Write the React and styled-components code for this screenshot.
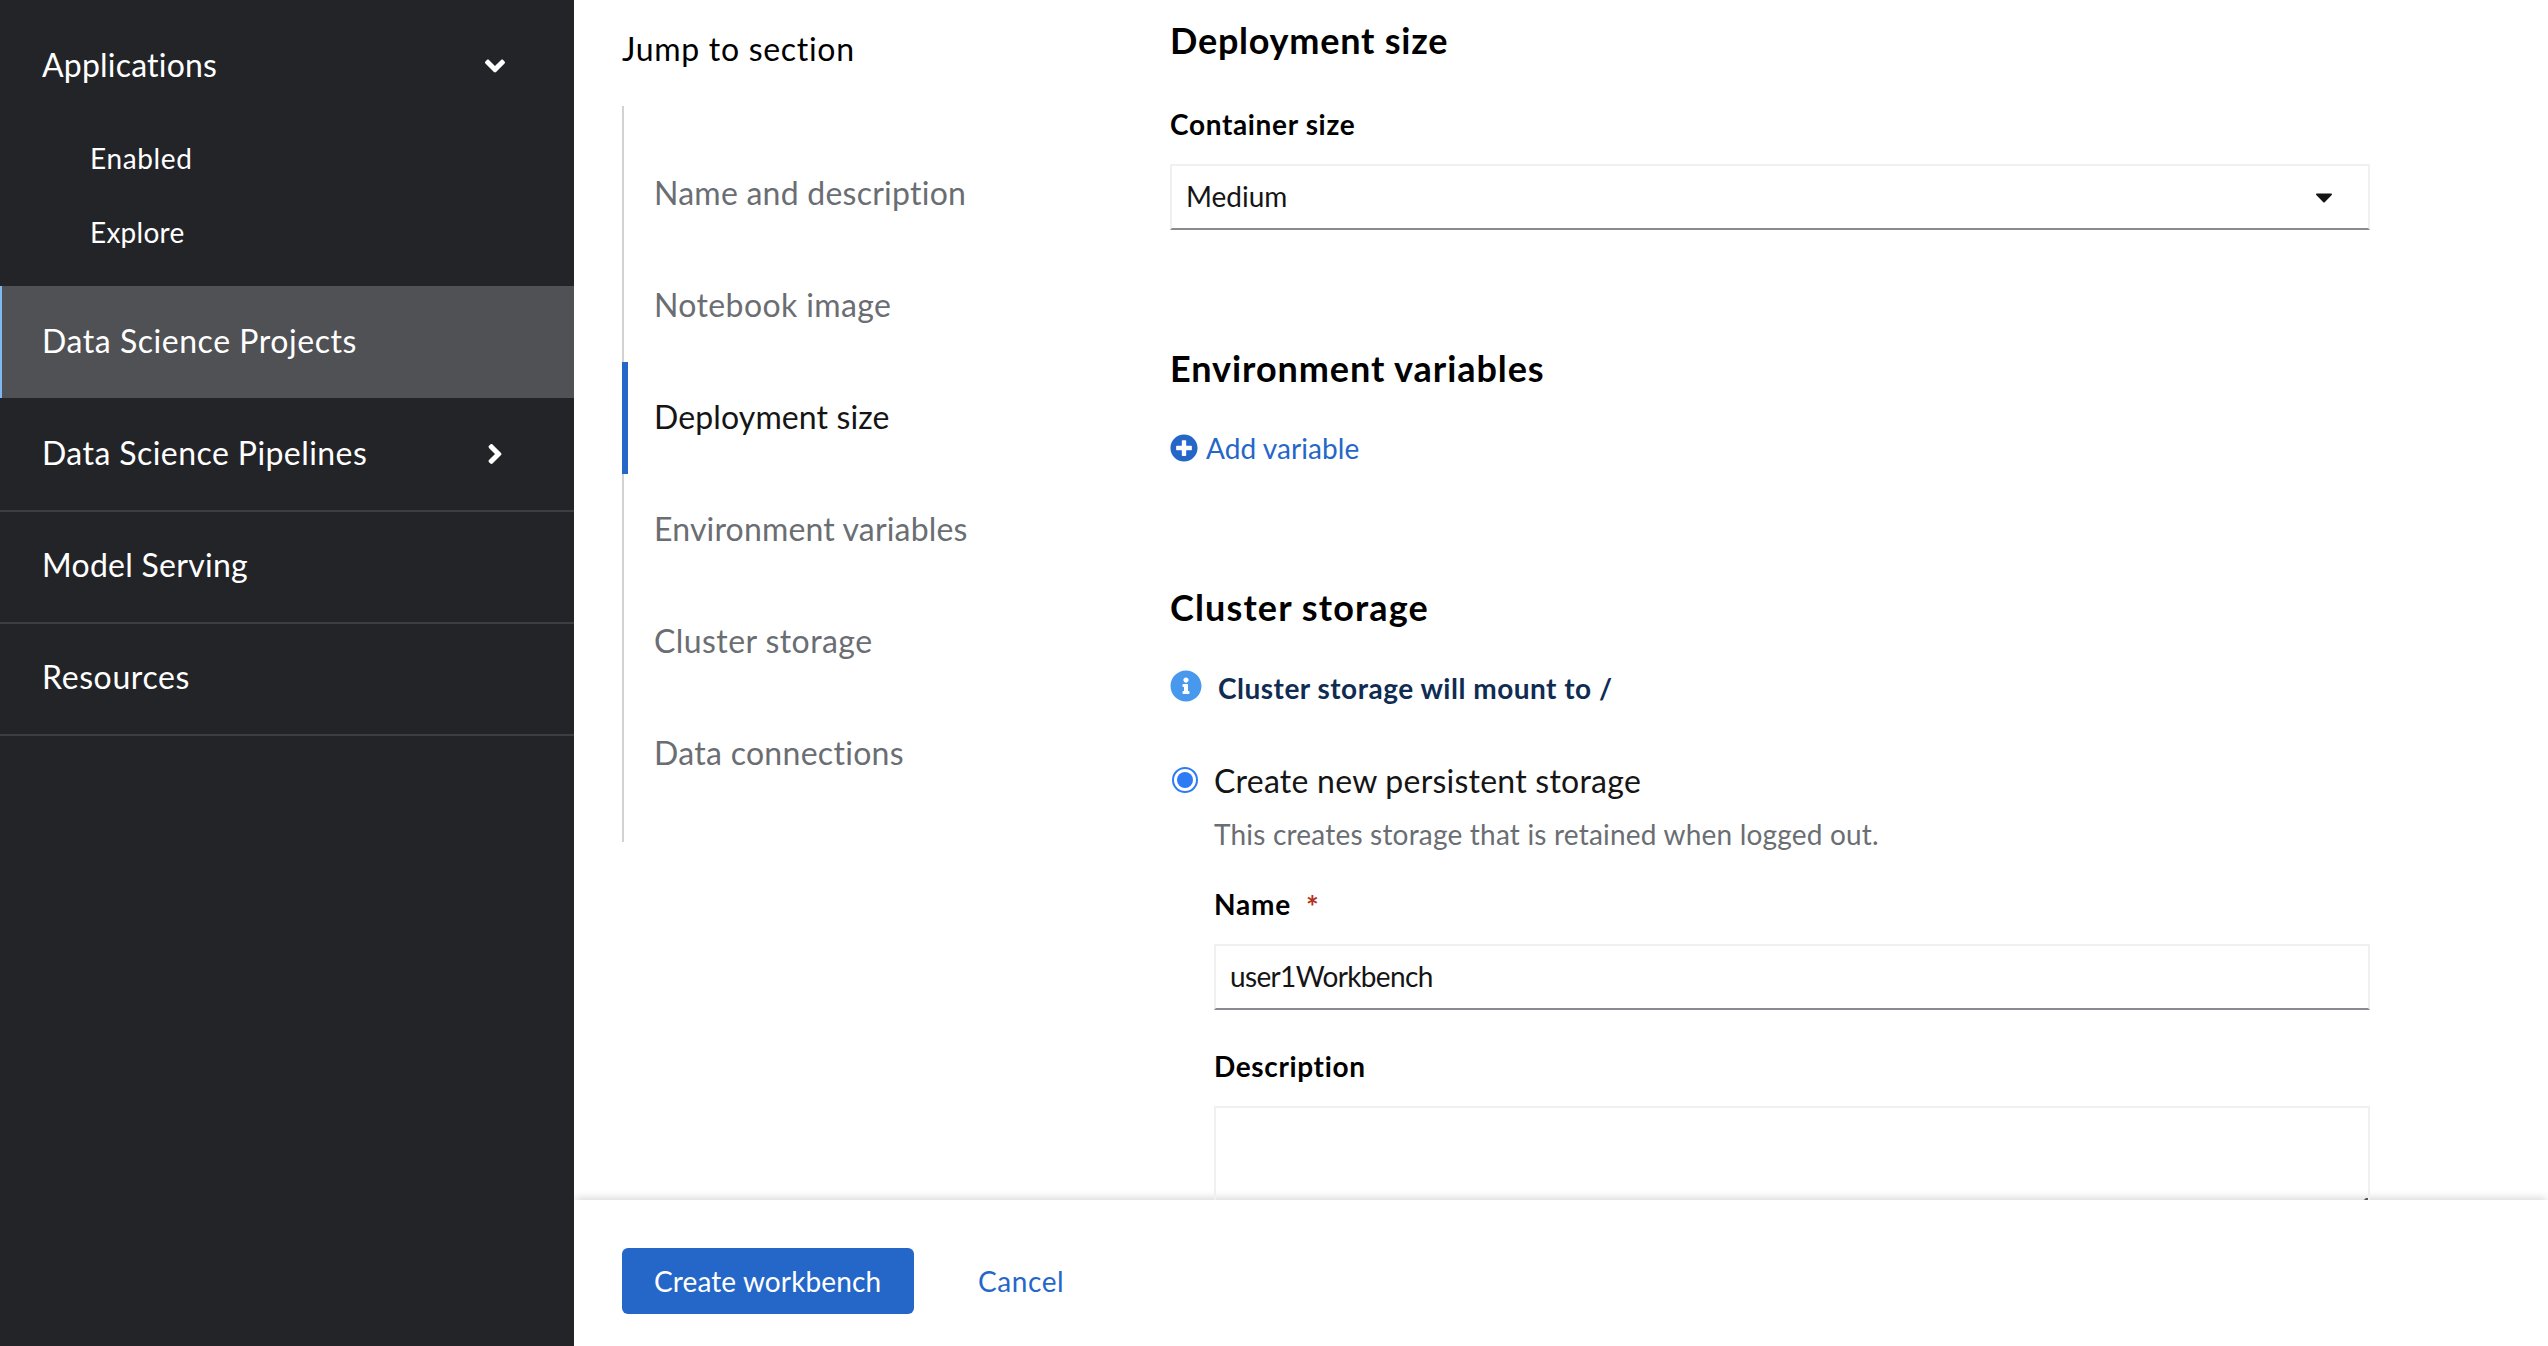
import React from 'react';
import styled, { createGlobalStyle, css } from 'styled-components';
import { FaAngleDown, FaAngleRight, FaPlusCircle, FaInfoCircle } from 'react-icons/fa';

const GlobalStyle = createGlobalStyle`
  *, *::before, *::after { box-sizing: border-box; }
  body {
    margin: 0;
    overflow: hidden;
    background: #fff;
    color: #151515;
    font-family: Lato, "Liberation Sans", sans-serif;
    font-size: 32px;
  }
  svg { display: block; flex: none; }
`;

const Text = styled.span`
  letter-spacing: ${(p) => p.$track || 0}px;
  white-space: nowrap;
`;

const Page = styled.div`
  display: grid;
  grid-template-columns: 574px 1fr;
  height: 1346px;
`;

/* Sidebar */
const Sidebar = styled.nav`
  position: relative;
  z-index: 1;
  background: #232428;
  color: #fff;
`;

const navRow = css`
  display: flex;
  align-items: center;
  justify-content: space-between;
  padding-left: 42px;
`;

const NavGroup = styled.div`
  ${navRow}
  height: 121px;
  padding: 8px 63px 0 42px;
`;

const SubList = styled.div`
  padding-bottom: 17px;
`;

const SubItem = styled.a`
  display: flex;
  align-items: center;
  height: 74px;
  padding-left: 90px;
  font-size: 28px;
`;

const NavItem = styled.a`
  ${navRow}
  height: ${(p) => p.$height || 112}px;
  padding-right: 63px;
  padding-bottom: ${(p) => (p.$height ? 3 : 5)}px;
  border-bottom: 2px solid #3c3e42;
  ${(p) =>
    p.$active &&
    css`
      padding-left: 40px;
      padding-bottom: 3px;
      border-bottom: 0;
      border-left: 2px solid #7db8f3;
      background: #505154;
    `}
`;

const Chevron = styled.span`
  display: flex;
  justify-content: center;
  width: 32px;
  padding-top: 2px;
`;

/* Main area */
const Main = styled.main`
  display: grid;
  grid-template-rows: 1200px 146px;
  min-width: 0;
`;

const Body = styled.div`
  display: grid;
  grid-template-columns: 548px 1200px;
  padding-left: 48px;
  overflow: hidden;
`;

const JumpNav = styled.aside`
  padding-top: 25px;
`;

const JumpTitle = styled.div`
  margin-bottom: 33px;
  line-height: 48px;
  color: #000;
`;

const JumpList = styled.div`
  padding: 32px 0;
  border-left: 2px solid #d2d2d2;
`;

const JumpItem = styled.a`
  display: flex;
  align-items: center;
  height: 112px;
  margin-left: -2px;
  padding: 0 0 3px 26px;
  border-left: 6px solid ${(p) => (p.$active ? '#2567c8' : 'transparent')};
  color: ${(p) => (p.$active ? '#151515' : '#6a6e73')};
`;

const Form = styled.form`
  display: flex;
  flex-direction: column;
  gap: 115px;
  padding-top: 17px;
`;

const Section = styled.section``;

const Heading = styled.h2`
  margin: 0 0 ${(p) => p.$gap}px;
  font-size: 36px;
  font-weight: 700;
  line-height: 46px;
  color: #000;
`;

const Label = styled.label`
  display: flex;
  gap: 15px;
  height: 42px;
  margin-bottom: 19px;
  font-size: 28px;
  font-weight: 700;
  line-height: 42px;
  color: #000;
`;

const Required = styled.span`
  padding-top: 2px;
  font-size: 30px;
  color: #b5301d;
`;

const Control = styled.div`
  display: flex;
  align-items: center;
  justify-content: space-between;
  height: 66px;
  padding: 0 36px 2px 14px;
  border: 2px solid #f0f0f0;
  border-bottom-color: #8a8a90;
  font-size: 28px;
`;

const Caret = styled.svg`
  margin-top: 4px;
`;

const TextArea = styled.div`
  position: relative;
  height: 112px;
  border: 2px solid #f0f0f0;
  border-bottom-color: #8a8a90;
`;

const Grip = styled.svg`
  position: absolute;
  right: 0;
  bottom: 0;
`;

const LinkAction = styled.a`
  display: flex;
  align-items: center;
  gap: 8px;
  font-size: 28px;
  line-height: 42px;
  color: #2567c8;
`;

const Alert = styled.div`
  display: flex;
  gap: 16px;
  margin-bottom: 47px;
  font-size: 28px;
  font-weight: 700;
  line-height: 42px;
  color: #0f2c53;
`;

const AlertIcon = styled.span`
  padding-top: 3px;
  color: #4898ed;
`;

const RadioRow = styled.label`
  display: flex;
  align-items: center;
  height: 48px;
  gap: 16px;
  padding-left: 2px;
`;

const Radio = styled.span`
  display: grid;
  place-items: center;
  width: 26px;
  height: 26px;
  border: 2px solid #2f7bf6;
  border-radius: 50%;

  &::after {
    content: '';
    width: 16px;
    height: 16px;
    border-radius: 50%;
    background: #2f7bf6;
  }
`;

const Nested = styled.div`
  padding-left: 44px;
`;

const Helper = styled.div`
  margin: 9px 0 28px;
  font-size: 28px;
  line-height: 42px;
  color: #6a6e73;
`;

const Field = styled.div`
  margin-bottom: 35px;
`;

const Footer = styled.footer`
  display: flex;
  align-items: flex-start;
  gap: 32px;
  padding: 48px;
  background: #fff;
  box-shadow: 0 -4px 8px -2px rgba(3, 3, 3, 0.16);
`;

const Button = styled.button`
  display: flex;
  align-items: center;
  height: 66px;
  padding: 0 32px 1px;
  border: 0;
  border-radius: 6px;
  font: inherit;
  font-size: 28px;
  ${(p) =>
    p.$primary
      ? css`
          width: 292px;
          background: #2567c8;
          color: #fff;
        `
      : css`
          background: transparent;
          color: #2567c8;
        `}
`;

const sections = [
  { label: 'Name and description', track: 0.242 },
  { label: 'Notebook image', track: 0.383 },
  { label: 'Deployment size', track: 0.126, active: true },
  { label: 'Environment variables', track: 0.17 },
  { label: 'Cluster storage', track: 0.427 },
  { label: 'Data connections', track: 0.29 },
];

export default function App() {
  return (
    <>
      <GlobalStyle />
      <Page>
        <Sidebar>
          <NavGroup>
            <Text $track={0.2}>Applications</Text>
            <Chevron><FaAngleDown size={32} /></Chevron>
          </NavGroup>
          <SubList>
            <SubItem><Text $track={0.65}>Enabled</Text></SubItem>
            <SubItem><Text $track={0.25}>Explore</Text></SubItem>
          </SubList>
          <NavItem $active><Text $track={0.544}>Data Science Projects</Text></NavItem>
          <NavItem $height={114}>
            <Text $track={0.431}>Data Science Pipelines</Text>
            <Chevron><FaAngleRight size={32} /></Chevron>
          </NavItem>
          <NavItem><Text $track={0.269}>Model Serving</Text></NavItem>
          <NavItem><Text $track={0.62}>Resources</Text></NavItem>
        </Sidebar>
        <Main>
          <Body>
            <JumpNav>
              <JumpTitle><Text $track={0.695}>Jump to section</Text></JumpTitle>
              <JumpList>
                {sections.map((s) => (
                  <JumpItem key={s.label} $active={s.active}>
                    <Text $track={s.track}>{s.label}</Text>
                  </JumpItem>
                ))}
              </JumpList>
            </JumpNav>
            <Form>
              <Section>
                <Heading $gap={40}><Text $track={0.76}>Deployment size</Text></Heading>
                <Label><Text $track={0.66}>Container size</Text></Label>
                <Control>
                  <Text>Medium</Text>
                  <Caret width="16" height="10" viewBox="0 0 16 10" fill="#151515">
                    <path d="M1 .5h14c.9 0 1.3 1 .7 1.600L8.700 9.200c-.4.4-1 .4-1.400 0L.3 2.100C-.3 1.500.1.500 1 .5z" />
                  </Caret>
                </Control>
              </Section>
              <Section>
                <Heading $gap={36}><Text $track={0.93}>Environment variables</Text></Heading>
                <LinkAction>
                  <FaPlusCircle size={28} />
                  <Text $track={0.08}>Add variable</Text>
                </LinkAction>
              </Section>
              <Section>
                <Heading $gap={37}><Text $track={1.13}>Cluster storage</Text></Heading>
                <Alert>
                  <AlertIcon><FaInfoCircle size={32} /></AlertIcon>
                  <Text $track={0.5}>Cluster storage will mount to /</Text>
                </Alert>
                <RadioRow>
                  <Radio />
                  <Text $track={0.245}>Create new persistent storage</Text>
                </RadioRow>
                <Nested>
                  <Helper>
                    <Text $track={0.2}>This creates storage that is retained when logged out.</Text>
                  </Helper>
                  <Field>
                    <Label>
                      <Text $track={0.82}>Name</Text>
                      <Required>*</Required>
                    </Label>
                    <Control><Text $track={-0.647}>user1Workbench</Text></Control>
                  </Field>
                  <Field>
                    <Label><Text $track={0.64}>Description</Text></Label>
                    <TextArea>
                      <Grip width="18" height="18" viewBox="0 0 18 18" stroke="#555" strokeWidth="3">
                        <path d="M0 18L18 0M9 18l9-9" />
                      </Grip>
                    </TextArea>
                  </Field>
                </Nested>
              </Section>
            </Form>
          </Body>
          <Footer>
            <Button type="button" $primary><Text $track={0.118}>Create workbench</Text></Button>
            <Button type="button"><Text $track={0.571}>Cancel</Text></Button>
          </Footer>
        </Main>
      </Page>
    </>
  );
}
